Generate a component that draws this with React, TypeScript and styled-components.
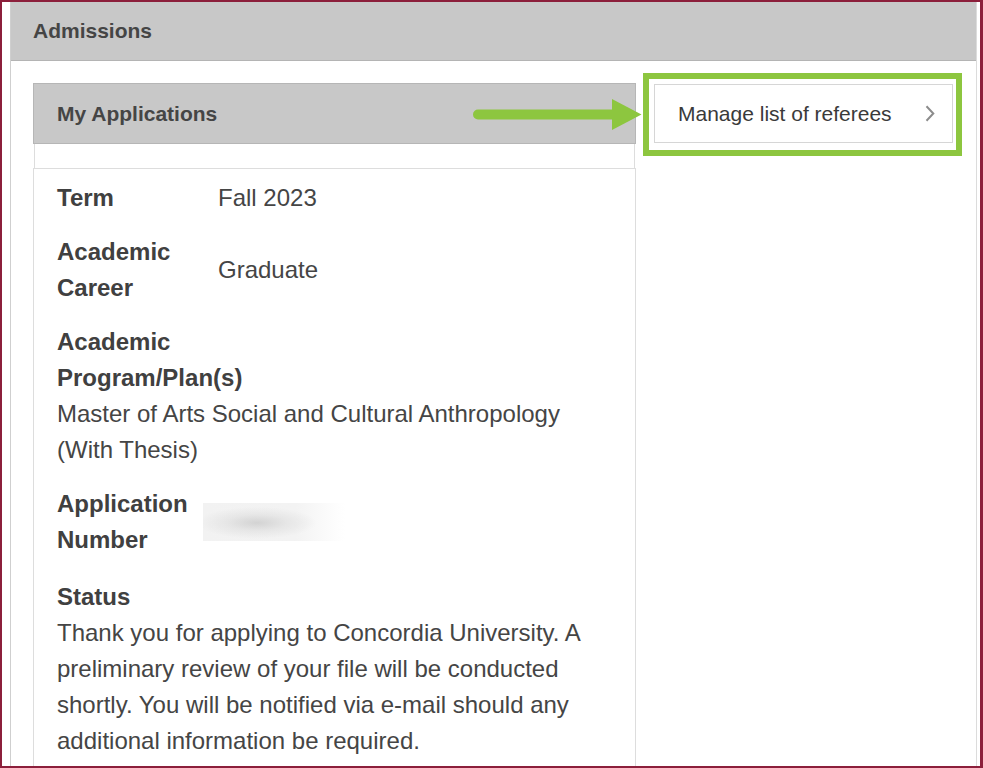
import React from "react";
import styled, { createGlobalStyle } from "styled-components";

const Global = createGlobalStyle`
  html, body { margin: 0; padding: 0; background: #fff; }
  body { font-family: "Liberation Sans", Arial, sans-serif; }
  * { box-sizing: border-box; }
`;

const GREEN = "#8dc63f";

const Frame = styled.div`
  width: 983px;
  height: 768px;
  border: 2px solid #8c1f3b;
  border-right-width: 3px;
  padding: 0 3px 0 8px;
  overflow: hidden;
  background: #fff;
`;

const Panel = styled.section`
  height: 100%;
  border-left: 1px solid #cfcfcf;
  border-right: 1px solid #dcdcdc;
`;

const PanelHeader = styled.header`
  height: 59px;
  background: #c8c8c8;
  border-bottom: 1px solid #b4b4b4;
  padding-left: 22px;
  display: flex;
  align-items: center;
  font-size: 21px;
  font-weight: bold;
  color: #454545;
`;

const Body = styled.div`
  position: relative;
  display: flex;
  padding: 22px 0 0 22px;
`;

const LeftCol = styled.div`
  width: 603px;
  flex: none;
`;

const RightCol = styled.div`
  flex: 1;
  padding: 1px 23px 0 18px;
`;

const CardHeader = styled.div`
  height: 61px;
  background: #c8c8c8;
  border: 1px solid #b6b6b6;
  padding-left: 23px;
  display: flex;
  align-items: center;
  font-size: 21px;
  font-weight: bold;
  color: #454545;
`;

const Spacer = styled.div`
  height: 24px;
  margin: 0 1px;
  border-left: 1px solid #dddddd;
  border-right: 1px solid #dddddd;
`;

const Card = styled.div`
  border: 1px solid #dddddd;
  border-bottom: none;
  padding: 11px 24px 40px 23px;
  font-size: 24px;
  line-height: 36px;
  color: #454545;
`;

const Row = styled.div<{ $gap?: number }>`
  display: grid;
  grid-template-columns: 161px 1fr;
  align-items: center;
  margin-top: ${(p) => p.$gap ?? 0}px;
`;

const Block = styled.div<{ $gap?: number }>`
  margin-top: ${(p) => p.$gap ?? 0}px;
`;

const Label = styled.div<{ $max?: number }>`
  font-weight: bold;
  color: #404040;
  max-width: ${(p) => (p.$max ? `${p.$max}px` : "none")};
`;

const Value = styled.div`
  color: #454545;
`;

const Redacted = styled.span`
  display: block;
  width: 142px;
  height: 38px;
  margin-left: -15px;
  background:
    radial-gradient(ellipse 42% 42% at 38% 52%, rgba(200, 200, 200, 0.75) 0%, rgba(215, 215, 215, 0.45) 50%, rgba(235, 235, 235, 0) 100%),
    linear-gradient(to right, #f2f2f2 0%, #f3f3f3 65%, #fbfbfb 88%, #ffffff 100%);
`;

const LinkButton = styled.a`
  position: relative;
  display: flex;
  align-items: center;
  justify-content: space-between;
  height: 59px;
  border: 1px solid #d6d6d6;
  padding: 0 17px 0 23px;
  font-size: 21px;
  color: #3a3a3a;
  text-decoration: none;
  background: #fff;

  &::after {
    content: "";
    position: absolute;
    top: -12px;
    left: -12px;
    right: -10px;
    bottom: -14px;
    border: 6.5px solid ${GREEN};
    pointer-events: none;
  }
`;

const Arrow = styled.svg`
  position: absolute;
  left: 462px;
  top: 38px;
`;

const Chevron = () => (
  <svg width="10" height="17" viewBox="0 0 10 17">
    <polyline
      points="1.5,1.2 8.3,8.5 1.5,15.8"
      fill="none"
      stroke="#8c8c8c"
      strokeWidth="2"
    />
  </svg>
);

export default function App() {
  return (
    <>
      <Global />
      <Frame>
        <Panel>
          <PanelHeader>Admissions</PanelHeader>
          <Body>
            <LeftCol>
              <CardHeader>My Applications</CardHeader>
              <Spacer />
              <Card>
                <Row>
                  <Label>Term</Label>
                  <Value>Fall 2023</Value>
                </Row>
                <Row $gap={18}>
                  <Label>Academic Career</Label>
                  <Value>Graduate</Value>
                </Row>
                <Block $gap={18}>
                  <Label $max={190}>Academic Program/Plan(s)</Label>
                  <Value>Master of Arts Social and Cultural Anthropology (With Thesis)</Value>
                </Block>
                <Row $gap={18}>
                  <Label>Application Number</Label>
                  <Value>
                    <Redacted />
                  </Value>
                </Row>
                <Block $gap={21}>
                  <Label>Status</Label>
                  <Value>
                    Thank you for applying to Concordia University. A preliminary review of your
                    file will be conducted shortly. You will be notified via e-mail should any
                    additional information be required.
                  </Value>
                </Block>
              </Card>
            </LeftCol>
            <RightCol>
              <LinkButton href="#">
                <span>Manage list of referees</span>
                <Chevron />
              </LinkButton>
            </RightCol>
            <Arrow width="169" height="31" viewBox="0 0 169 31">
              <path d="M5 10.5 H140 V20.5 H5 A5 5 0 0 1 5 10.5 Z" fill={GREEN} />
              <polygon points="139,0 168.5,15.5 139,31" fill={GREEN} />
            </Arrow>
          </Body>
        </Panel>
      </Frame>
    </>
  );
}
